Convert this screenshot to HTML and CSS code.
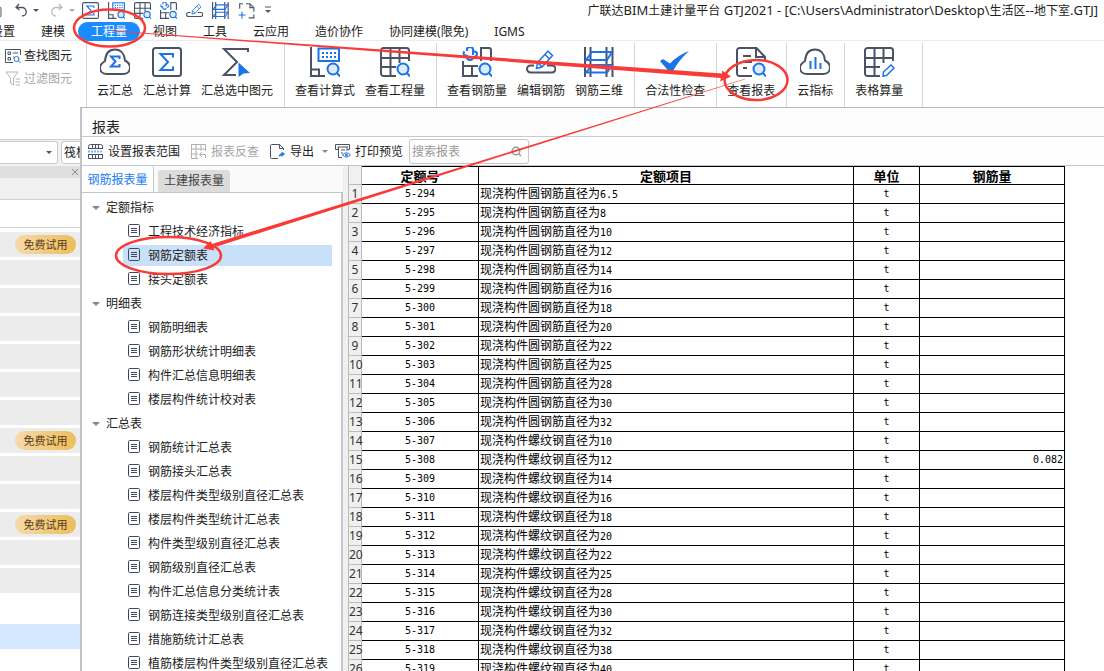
FILE: index.html
```html
<!DOCTYPE html>
<html lang="zh-CN">
<head>
<meta charset="utf-8">
<title>广联达BIM土建计量平台 GTJ2021</title>
<link rel="stylesheet" href="styles.css">
</head>
<body>
<svg class="defs" aria-hidden="true">
  <symbol id="cloud" viewBox="0 0 30 30"><path class="d" d="M7 27C3 27 0 24.500 0 20.500 0 17.500 2 16 5 14 5.500 7 9 2.500 15 2.500S24.500 7 25 13.500C28 15 30 17.500 30 20.500 30 24.500 27 27 23 27Z"/></symbol>
  <symbol id="lens" viewBox="0 0 30 30"><circle class="b lensfill" cx="23" cy="22" r="5.500"/><path class="b" d="M27 26L30 29.500"/></symbol>
  <symbol id="sumbox" viewBox="0 0 30 30"><rect class="d" x="1" y="1" width="28" height="28" rx="2.500"/><path class="b" d="M21 10.500V7H8.500L16 15 8.500 23H21V19.500"/></symbol>
  <symbol id="calc" viewBox="0 0 30 30"><path class="d" d="M1 0V29H15M1 22.500H9V29"/><rect class="b" x="8.500" y="1.500" width="20.500" height="12.500"/><path class="b dots" d="M12 6H27M12 10H27"/><use href="#lens"/></symbol>
  <symbol id="grid" viewBox="0 0 30 30"><path class="d" d="M29 14V3.500A2.500 2.500 0 0 0 26.500 1H3.500A2.500 2.500 0 0 0 1 3.500V26.500A2.500 2.500 0 0 0 3.500 29H16M1 11H29M1 20H16M10.500 1V29M19.500 1V16"/></symbol>
  <symbol id="gridlens" viewBox="0 0 30 30"><use href="#grid"/><use href="#lens"/></symbol>
  <symbol id="rebar" viewBox="0 0 30 30"><path class="d" d="M19 14V1H27A2 2 0 0 1 29 3V14M1 14V29H16M1 19H16M10 19V29"/><path class="b" d="M5 4V2.500A3 2.500 0 0 1 11 2.500V8M2.500 4.500A3 3 0 0 0 2.500 8.500H5M11 4.500H12.500A2.500 2.500 0 0 1 12.500 9.500M5 8V10A3 3 0 0 0 11 10"/><use href="#lens"/></symbol>
  <symbol id="edit" viewBox="0 0 30 30"><path class="d" d="M8 18.500H4.500A3.300 3.300 0 0 0 4.500 25.500H26A3.300 3.300 0 0 0 26 18.500H21"/><path class="b thin" d="M10.500 21.500L11.500 15.500 22 4 26.500 8.500 16 20ZM19 7.500L23.500 12M11.500 15.500L16 20"/></symbol>
  <symbol id="beam" viewBox="0 0 30 30"><path class="d" d="M1 0V30M6.500 0V30M22.500 0V30M28.500 0V30"/><path class="b" d="M8 5H28L23 13H2ZM8 18H28L23 25.500H2Z"/></symbol>
  <symbol id="report" viewBox="0 0 30 30"><path class="d" d="M29 14V10L20.500 1H3.500A2.500 2.500 0 0 0 1 3.500V26.500A2.500 2.500 0 0 0 3.500 29H16M20 2V10H29M7 9H15M7 15H16M7 21H11"/><use href="#lens"/></symbol>
  <symbol id="doc" viewBox="0 0 12 13"><rect x=".5" y=".5" width="11" height="12" rx="1.200" fill="none" stroke="#3f4a5f" stroke-width="1"/><path d="M3 4.500H9M3 6.500H9M3 8.500H9" stroke="#3f4a5f" stroke-width="1"/></symbol>
</svg>
<div class="app">
  <header class="titlebar">
    <div class="history">
      <svg width="2" height="16"><path d="M0 5Q1 5 1 7V13Q1 15 0 15" fill="none" stroke="#555"/></svg>
      <button class="split" aria-label="撤销"><svg width="12" height="14" viewBox="0 0 12 14"><path d="M4 1L1 4.500 4.500 7M1 4.500H7A4 4 0 0 1 7 13" fill="none" stroke="#4a5365" stroke-width="1.300"/></svg><i class="caret"></i></button>
      <button class="split off" aria-label="恢复"><svg width="12" height="14" viewBox="0 0 12 14"><path d="M8 1L11 4.500 7.500 7M11 4.500H5A4 4 0 0 0 5 13" fill="none" stroke="#bbb" stroke-width="1.300"/></svg><i class="caret"></i></button>
    </div>
    <div class="quick">
      <button aria-label="汇总"><svg><use href="#sumbox"/></svg></button>
      <button aria-label="计算式"><svg><use href="#calc"/></svg></button>
      <button aria-label="工程量表"><svg><use href="#gridlens"/></svg></button>
      <button aria-label="钢筋量"><svg><use href="#rebar"/></svg></button>
      <button aria-label="编辑"><svg><use href="#edit"/></svg></button>
      <button aria-label="三维"><svg><use href="#beam"/></svg></button>
      <button aria-label="选择"><svg viewBox="0 0 30 30"><path class="d" d="M3 12V3H9M14 3H21L28 10V17M28 22V28H19M21 3V10H28"/><path class="b" d="M7 17V29M1 23H13"/></svg></button>
      <button aria-label="更多"><svg class="more" viewBox="0 0 8 8"><path d="M1 1H7" stroke="#555"/><path d="M1 4H7L4 7Z" fill="#555"/></svg></button>
    </div>
    <h1 class="title">广联达<span>BIM</span>土建计量平台<span> GTJ2021 - [C:\Users\Administrator\Desktop\</span>生活区<span>--</span>地下室<span>.GTJ]</span></h1>
  </header>
  <nav class="menu">
    <button>设置</button><button>建模</button><button class="on">工程量</button><button>视图</button><button>工具</button><button>云应用</button><button>造价协作</button><button>协同建模(限免)</button><button>IGMS</button>
  </nav>
  <div class="ribbon">
    <div class="finders">
      <button><svg width="16" height="16" viewBox="0 0 16 16" fill="none" stroke="#4a5365"><path d="M15.500 7V1.500H.5V14.500H8M3 4H5.500V6.500H3ZM3 9.500H5.500V12H3ZM8 5H13M8 9H9"/><circle cx="11.500" cy="11" r="2.500" stroke="#1a73e8"/><path d="M13.500 13L15.500 15" stroke="#1a73e8"/></svg>查找图元</button>
      <button class="off"><svg width="16" height="16" viewBox="0 0 16 16" fill="none" stroke="#b5b5b5"><path d="M1 1H13L8.500 7V14L5.500 12V7ZM10.500 8H15M10.500 11H15M10.500 14H15"/></svg>过滤图元</button>
    </div>
    <div class="group">
      <button><svg viewBox="0 0 30 30"><use href="#cloud"/><path class="b" d="M19.500 12V9.500H11L15.500 14.500 11 19.500H19.500V17"/></svg>云汇总</button>
      <button><svg><use href="#sumbox"/></svg>汇总计算</button>
      <button><svg viewBox="0 0 30 30"><path class="d" d="M26 5V2H2L15 15 2 28H14"/><path d="M16.500 15.500L28 26 21.500 26.500 16.500 30Z" fill="#1a73e8"/></svg>汇总选中图元</button>
    </div>
    <div class="group">
      <button><svg><use href="#calc"/></svg>查看计算式</button>
      <button><svg><use href="#gridlens"/></svg>查看工程量</button>
    </div>
    <div class="group">
      <button><svg><use href="#rebar"/></svg>查看钢筋量</button>
      <button><svg><use href="#edit"/></svg>编辑钢筋</button>
      <button><svg><use href="#beam"/></svg>钢筋三维</button>
    </div>
    <div class="group">
      <button><svg viewBox="0 0 30 30"><path d="M0 14L3 12 10 16.500Q18 8 29 4 19 13 13 24Q10 25 8 23.500Z" fill="#1a73e8"/></svg>合法性检查</button>
    </div>
    <div class="group">
      <button><svg><use href="#report"/></svg>查看报表</button>
    </div>
    <div class="group">
      <button><svg viewBox="0 0 30 30"><use href="#cloud"/><path class="b" d="M10.500 22V14M15.500 22V10M20.500 22V16"/></svg>云指标</button>
    </div>
    <div class="group last">
      <button><svg viewBox="0 0 30 30"><use href="#grid"/><path class="b thin" d="M19 29L19.500 25 27 18 30 21 22.500 28.500Z"/></svg>表格算量</button>
    </div>
  </div>
  <aside class="side">
    <div class="pickers">
      <button class="pick" aria-label="楼层"><i class="caret"></i></button>
      <button class="pick next">筏板基础</button>
    </div>
    <div class="panelhead"><button aria-label="关闭"><svg width="8" height="8" viewBox="0 0 8 8"><path d="M1 1L7 7M7 1L1 7" stroke="#888"/></svg></button></div>
    <div class="strip"></div>
    <div class="blank"></div>
    <div class="rows">
      <div><button class="trial">免费试用</button></div><div></div><div></div><div></div><div></div><div></div><div></div>
      <div><button class="trial">免费试用</button></div><div></div><div></div>
      <div><button class="trial">免费试用</button></div><div></div><div></div>
    </div>
    <div class="chosen"></div>
  </aside>

  <section class="dialog" aria-labelledby="dlg">
    <h2 id="dlg" class="dlgtitle">报表</h2>
    <div class="tools">
      <button><svg width="15" height="15" viewBox="0 0 15 15"><path d="M.5 5V2.500A2 2 0 0 1 2.500.5H12.500A2 2 0 0 1 14.500 2.500V5M.5 10V14.500H14.500V10M4.500 0V5M7.500 0V5M10.500 0V5M4.500 10V15M7.500 10V15M10.500 10V15M.5 4.500H14.500M.5 10.500H14.500" fill="none" stroke="#4a5365"/><path d="M0 7.500H15" stroke="#7db4f5" stroke-width="2" stroke-dasharray="2 1"/></svg>设置报表范围</button>
      <button class="off"><svg width="15" height="15" viewBox="0 0 15 15"><path d="M14.500 7V.5H.5V14.500H7M.5 5H14.500M.5 10H7M5 .5V14.500M10 .5V7M11 8L8.500 10.500 11 13M8.500 10.500H14.500V14" fill="none" stroke="#b0b0b0"/></svg>报表反查</button>
      <button class="export"><svg width="15" height="15" viewBox="0 0 15 15"><path d="M8 14.500H1.500Q.5 14.500.5 13.500V1.500Q.5.5 1.500.5H9.500L13.500 4.500V6M9.500.5V4.500H13.500" fill="none" stroke="#4a5365"/><path d="M8.500 13Q9 9.500 11.500 9.500V7.500L15 10 11.500 13V11.500Q10 11.500 8.500 13Z" fill="#1a73e8"/></svg>导出<i class="caret"></i></button>
      <button class="print"><svg width="16" height="15" viewBox="0 0 16 15"><path d="M3 5.500H.5V.5H14.500V5.500H12.500M2.500 3H13M3.500 3V13.500H7M6 6H10M6 9H8M12 3V7" fill="none" stroke="#4a5365"/><path d="M7.500 11Q11.500 6.500 15.500 11 11.500 15 7.500 11Z" fill="none" stroke="#1a73e8"/><circle cx="11.500" cy="11" r="1.300" fill="#1a73e8"/></svg>打印预览</button>
      <label class="search"><input type="text" placeholder="搜索报表" aria-label="搜索报表"><svg width="11" height="11" viewBox="0 0 11 11"><circle cx="5" cy="5" r="3.800" fill="none" stroke="#999" stroke-width="1.400"/><path d="M8 8L10 10" stroke="#999" stroke-width="1.400"/></svg></label>
    </div>
    <div class="body">
      <div class="left">
        <div class="tabs"><button class="on">钢筋报表量</button><button>土建报表量</button></div>
        <div class="tree">
          <button class="node"><i class="caret"></i>定额指标</button>
          <button class="leaf"><svg><use href="#doc"/></svg>工程技术经济指标</button>
          <button class="leaf sel"><svg><use href="#doc"/></svg>钢筋定额表</button>
          <button class="leaf"><svg><use href="#doc"/></svg>接头定额表</button>
          <button class="node"><i class="caret"></i>明细表</button>
          <button class="leaf"><svg><use href="#doc"/></svg>钢筋明细表</button>
          <button class="leaf"><svg><use href="#doc"/></svg>钢筋形状统计明细表</button>
          <button class="leaf"><svg><use href="#doc"/></svg>构件汇总信息明细表</button>
          <button class="leaf"><svg><use href="#doc"/></svg>楼层构件统计校对表</button>
          <button class="node"><i class="caret"></i>汇总表</button>
          <button class="leaf"><svg><use href="#doc"/></svg>钢筋统计汇总表</button>
          <button class="leaf"><svg><use href="#doc"/></svg>钢筋接头汇总表</button>
          <button class="leaf"><svg><use href="#doc"/></svg>楼层构件类型级别直径汇总表</button>
          <button class="leaf"><svg><use href="#doc"/></svg>楼层构件类型统计汇总表</button>
          <button class="leaf"><svg><use href="#doc"/></svg>构件类型级别直径汇总表</button>
          <button class="leaf"><svg><use href="#doc"/></svg>钢筋级别直径汇总表</button>
          <button class="leaf"><svg><use href="#doc"/></svg>构件汇总信息分类统计表</button>
          <button class="leaf"><svg><use href="#doc"/></svg>钢筋连接类型级别直径汇总表</button>
          <button class="leaf"><svg><use href="#doc"/></svg>措施筋统计汇总表</button>
          <button class="leaf"><svg><use href="#doc"/></svg>植筋楼层构件类型级别直径汇总表</button>
        </div>
      </div>
      <div class="sheet">
        <table>
          <colgroup><col class="c0"><col class="c1"><col class="c2"><col class="c3"><col class="c4"></colgroup>
          <thead><tr><td class="corner"></td><th>定额号</th><th>定额项目</th><th>单位</th><th>钢筋量</th></tr></thead>
          <tbody>
            <tr><th>1</th><td>5-294</td><td>现浇构件圆钢筋直径为<span>6.5</span></td><td>t</td><td></td></tr>
            <tr><th>2</th><td>5-295</td><td>现浇构件圆钢筋直径为<span>8</span></td><td>t</td><td></td></tr>
            <tr><th>3</th><td>5-296</td><td>现浇构件圆钢筋直径为<span>10</span></td><td>t</td><td></td></tr>
            <tr><th>4</th><td>5-297</td><td>现浇构件圆钢筋直径为<span>12</span></td><td>t</td><td></td></tr>
            <tr><th>5</th><td>5-298</td><td>现浇构件圆钢筋直径为<span>14</span></td><td>t</td><td></td></tr>
            <tr><th>6</th><td>5-299</td><td>现浇构件圆钢筋直径为<span>16</span></td><td>t</td><td></td></tr>
            <tr><th>7</th><td>5-300</td><td>现浇构件圆钢筋直径为<span>18</span></td><td>t</td><td></td></tr>
            <tr><th>8</th><td>5-301</td><td>现浇构件圆钢筋直径为<span>20</span></td><td>t</td><td></td></tr>
            <tr><th>9</th><td>5-302</td><td>现浇构件圆钢筋直径为<span>22</span></td><td>t</td><td></td></tr>
            <tr><th>10</th><td>5-303</td><td>现浇构件圆钢筋直径为<span>25</span></td><td>t</td><td></td></tr>
            <tr><th>11</th><td>5-304</td><td>现浇构件圆钢筋直径为<span>28</span></td><td>t</td><td></td></tr>
            <tr><th>12</th><td>5-305</td><td>现浇构件圆钢筋直径为<span>30</span></td><td>t</td><td></td></tr>
            <tr><th>13</th><td>5-306</td><td>现浇构件圆钢筋直径为<span>32</span></td><td>t</td><td></td></tr>
            <tr><th>14</th><td>5-307</td><td>现浇构件螺纹钢直径为<span>10</span></td><td>t</td><td></td></tr>
            <tr><th>15</th><td>5-308</td><td>现浇构件螺纹钢直径为<span>12</span></td><td>t</td><td>0.082</td></tr>
            <tr><th>16</th><td>5-309</td><td>现浇构件螺纹钢直径为<span>14</span></td><td>t</td><td></td></tr>
            <tr><th>17</th><td>5-310</td><td>现浇构件螺纹钢直径为<span>16</span></td><td>t</td><td></td></tr>
            <tr><th>18</th><td>5-311</td><td>现浇构件螺纹钢直径为<span>18</span></td><td>t</td><td></td></tr>
            <tr><th>19</th><td>5-312</td><td>现浇构件螺纹钢直径为<span>20</span></td><td>t</td><td></td></tr>
            <tr><th>20</th><td>5-313</td><td>现浇构件螺纹钢直径为<span>22</span></td><td>t</td><td></td></tr>
            <tr><th>21</th><td>5-314</td><td>现浇构件螺纹钢直径为<span>25</span></td><td>t</td><td></td></tr>
            <tr><th>22</th><td>5-315</td><td>现浇构件螺纹钢直径为<span>28</span></td><td>t</td><td></td></tr>
            <tr><th>23</th><td>5-316</td><td>现浇构件螺纹钢直径为<span>30</span></td><td>t</td><td></td></tr>
            <tr><th>24</th><td>5-317</td><td>现浇构件螺纹钢直径为<span>32</span></td><td>t</td><td></td></tr>
            <tr><th>25</th><td>5-318</td><td>现浇构件螺纹钢直径为<span>38</span></td><td>t</td><td></td></tr>
            <tr><th>26</th><td>5-319</td><td>现浇构件螺纹钢直径为<span>40</span></td><td>t</td><td></td></tr>
          </tbody>
        </table>
      </div>
    </div>
  </section>

  <svg class="marks" width="1104" height="671" viewBox="0 0 1104 671" aria-hidden="true">
    <g fill="none" stroke="#f93a37" stroke-width="2.500">
      <ellipse cx="109.500" cy="28" rx="35.500" ry="18.500"/>
      <ellipse cx="756" cy="80" rx="31.500" ry="20"/>
      <ellipse cx="168.500" cy="255.500" rx="52.500" ry="18.500"/>
    </g>
    <g fill="#f93a37">
      <path d="M112 30.500L722 73.500 722 70.500 731 76.500 720 81.500 721 78 112 31.200Z"/>
      <path d="M745 78.800L212 244 210.500 241 203 248.500 214.500 250.500 213.500 247.500 745 79.200Z"/>
    </g>
  </svg>
</div>
</body>
</html>
```

FILE: styles.css
```css
* { box-sizing: border-box; }
body { margin: 0; font: 12px/16px "Noto Sans", "Noto Sans CJK SC", sans-serif; color: #222; background: #fff; }
button { margin: 0; padding: 0; border: 0; background: none; font: inherit; color: inherit; white-space: nowrap; }
h1, h2 { margin: 0; font-weight: 400; }
svg { display: block; flex: none; }
.defs { position: absolute; width: 0; height: 0; }
.d { fill: none; stroke: #4a5365; stroke-width: 2; }
.b { fill: none; stroke: #1a73e8; stroke-width: 2; }
.lensfill { fill: #deebfb; }
.thin { stroke-width: 1.5px; }
.dots { stroke-dasharray: 2 2; }
.off { color: #a6a6a6; }
.caret { width: 0; height: 0; flex: none; border: 3px solid transparent; border-top: 3px solid #555; border-bottom: 0; }
.off .caret { border-top-color: #aaa; }

.app { position: relative; height: 100vh; overflow: hidden; }
.titlebar { display: flex; align-items: center; height: 20px; }
.history { display: flex; align-items: center; gap: 13px; width: 82px; }
.split { display: flex; align-items: center; gap: 6px; width: 23px; }
.quick { display: flex; align-items: center; gap: 9px; }
.quick svg { width: 17px; height: 17px; }
.quick .more { width: 8px; height: 8px; }
.title { margin-left: auto; padding-right: 6px; font-size: 12px; line-height: 20px; white-space: pre; }
.title span { font-size: 13px; }

.menu { display: flex; height: 21px; margin-left: -22px; padding-top: 2px; border-bottom: 1px solid #ececec; }
.menu button { height: 19px; padding: 0 13px; line-height: 18px; }
.menu .on { background: #1a8cff; color: #fff; border-radius: 10px; }

.ribbon { display: flex; height: 99px; padding-top: 2px; border-bottom: 1px solid #d0d0d0; }
.finders { display: flex; flex-direction: column; gap: 7px; width: 87px; padding: 5px 0 0 5px; border-right: 1px solid #d6d6d6; }
.finders button { display: flex; align-items: center; gap: 3px; }
.group { display: flex; gap: 10px; padding: 4px 11px 0 10px; border-right: 1px solid #d6d6d6; align-items: flex-start; }
.group button { display: flex; flex-direction: column; align-items: center; gap: 6px; }
.group svg { width: 30px; height: 30px; overflow: visible; }
.last { padding-right: 19px; }

.side { width: 81px; overflow: hidden; }
.pickers { display: flex; gap: 3px; height: 26px; padding: 1px 0; background: #f3f3f3; }
.pick { display: flex; align-items: center; justify-content: flex-end; width: 58px; height: 23px; flex: none; padding-right: 5px; background: #fff; border: 1px solid #ccc; border-left: 0; border-radius: 0 3px 3px 0; }
.next { justify-content: flex-start; padding-left: 2px; border-left: 1px solid #ccc; border-radius: 3px; }
.panelhead { display: flex; justify-content: flex-end; align-items: center; height: 12px; padding-right: 2px; background: #dedede; }
.strip { height: 22px; background: #f0f0f0; border-bottom: 1px solid #d0d0d0; }
.blank { height: 28px; border-bottom: 1px solid #d0d0d0; }
.rows { display: grid; gap: 3px; padding-top: 4px; }
.rows div { display: flex; align-items: center; justify-content: flex-end; height: 25px; padding-right: 5px; background: #ececec; }
.trial { width: 61px; height: 19px; line-height: 18px; font-size: 11px; border-radius: 10px; color: #5d3a12; background: linear-gradient(90deg, #f5daab, #ecbd5c); }
.chosen { height: 25px; margin-top: 31px; background: #d4e7ff; }

.dialog { position: absolute; left: 80px; top: 107px; right: 0; bottom: 0; display: flex; flex-direction: column; background: #fff; border-top: 1px solid #b8b8bb; border-left: 2px solid #c3c3c6; }
.dlgtitle { height: 29px; padding-left: 10px; font-size: 14px; line-height: 37px; border-bottom: 1px solid #c6c9ce; background: #fdfdfd; overflow: hidden; flex: none; }
.tools { display: flex; align-items: center; height: 29px; flex: none; padding: 1px 6px 0; border-bottom: 1px solid #c3c5c9; background: #fefefe; }
.tools button { display: flex; align-items: center; gap: 5px; margin-right: 11px; line-height: 18px; }
.tools .export .caret { margin-left: 3px; border-top-color: #888; }
.tools .export { margin-right: 7px; }
.tools .print { margin-right: 6px; gap: 4px; }
.search { display: flex; align-items: center; width: 120px; height: 25px; padding: 0 6px 0 2px; border: 1px solid #c6c6c6; border-radius: 3px; }
.search input { flex: 1; min-width: 0; padding: 0; border: 0; outline: 0; background: none; font: inherit; }
.search input::placeholder { color: #999; }

.body { flex: 1; min-height: 0; display: flex; }
.left { width: 266px; flex: none; display: flex; flex-direction: column; padding-right: 5px; background: #f0f0f0; }
.tabs { display: flex; align-items: flex-end; gap: 4px; height: 26px; flex: none; background: #fafafa; }
.tabs button { width: 72px; height: 22px; line-height: 22px; color: #444; background: #dcdcdc; border-radius: 3px 3px 0 0; }
.tabs .on { height: 26px; line-height: 27px; color: #1a7df0; background: #fff; border-right: 1px solid #c6c9ce; }
.tree { flex: 1; min-height: 0; overflow: hidden; padding-top: 2px; background: #fff; border-top: 1px solid #c3c5c9; border-right: 2px solid #c6c8cf; }
.tree button { display: flex; align-items: center; width: 100%; height: 24px; padding-top: 2px; }
.tree .node { gap: 7px; padding-left: 11px; }
.node .caret { border-width: 4px 4px 0 4px; border-top-color: #888; }
.tree .node { gap: 6px; padding-left: 10px; }
.tree .leaf { gap: 8px; padding-left: 46px; }
.leaf svg { width: 12px; height: 13px; margin-bottom: 3px; }
.tree .sel { width: 209px; height: 21px; margin: 2px 0 1px 41px; padding: 0 0 0 5px; background: #c9e0f9; }

.sheet { flex: 1; min-width: 0; overflow: hidden; }
table { width: 717px; table-layout: fixed; border-collapse: separate; border-spacing: 0; color: #000; }
.c0 { width: 14px; } .c1 { width: 117px; } .c2 { width: 375px; } .c3 { width: 66px; } .c4 { width: 145px; }
td, thead th { height: 19px; padding: 0 1px; line-height: 16px; border-right: 1px solid #000; border-bottom: 1px solid #000; text-align: center; overflow: hidden; white-space: nowrap; }
thead th { border-top: 1px solid #000; font: bold 13px/16px "Noto Sans CJK SC", sans-serif; }
td { font-family: "DejaVu Sans Mono", "Noto Sans CJK SC", monospace; font-size: 10px; }
td:nth-child(3) { font-family: "Noto Sans CJK SC", sans-serif; font-size: 12px; text-align: left; }
td span { font: 10px/16px "DejaVu Sans Mono", monospace; }
td:last-child { text-align: right; }
tbody th, .corner { padding: 0; height: 19px; background: #f0f0f0; border: 1px solid #bbb; border-top: 0; font: 12px/18px "Noto Sans", sans-serif; color: #333; }
.marks { position: absolute; left: 0; top: 0; pointer-events: none; }
```
